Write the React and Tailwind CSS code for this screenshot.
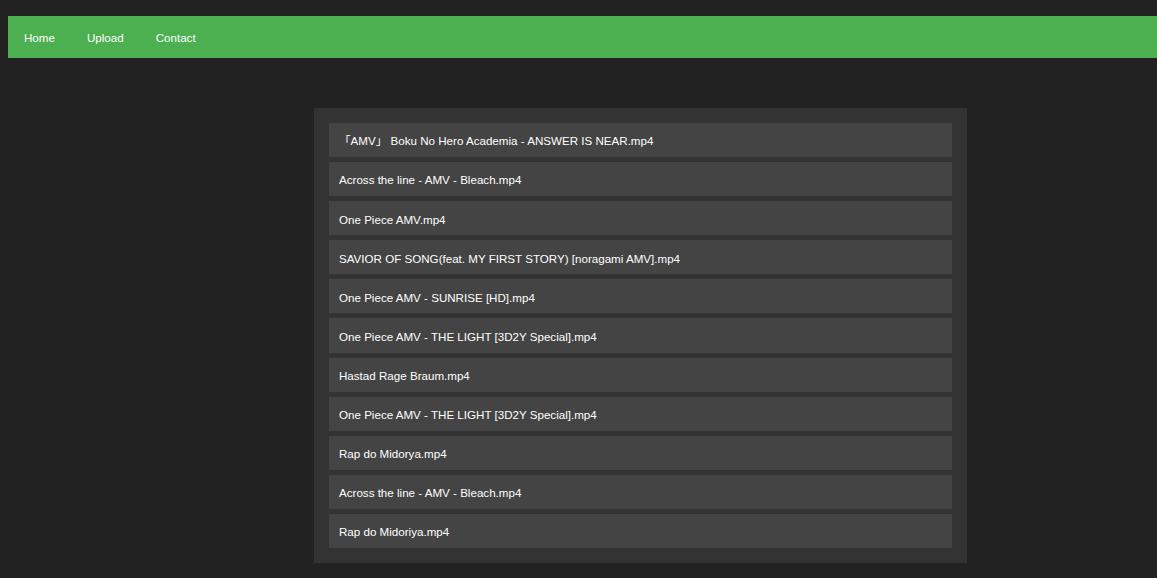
import React from 'react'

const videos = [
  '「AMV」 Boku No Hero Academia - ANSWER IS NEAR.mp4',
  'Across the line - AMV - Bleach.mp4',
  'One Piece AMV.mp4',
  'SAVIOR OF SONG(feat. MY FIRST STORY) [noragami AMV].mp4',
  'One Piece AMV - SUNRISE [HD].mp4',
  'One Piece AMV - THE LIGHT [3D2Y Special].mp4',
  'Hastad Rage Braum.mp4',
  'One Piece AMV - THE LIGHT [3D2Y Special].mp4',
  'Rap do Midorya.mp4',
  'Across the line - AMV - Bleach.mp4',
  'Rap do Midoriya.mp4',
]

function App() {
  return (
    <div className="min-h-screen bg-[#222222] pt-4 pl-2 text-[11.6px] text-white" style={{ fontFamily: '"Liberation Sans", "Noto Sans CJK JP", sans-serif' }}>
      <nav className="flex h-[42px] items-center bg-[#4caf50] px-4 pt-px">
        <a className="mr-[32px]">Home</a>
        <a className="mr-[32px]">Upload</a>
        <a>Contact</a>
      </nav>
      <div className="pt-[50px] pl-[306px]">
        <ul className="flex w-[653px] flex-col gap-[5px] bg-[#333333] p-[15px]">
          {videos.map((v, i) => (
            <li key={i} className="flex h-[34.1px] items-center bg-[#444444] px-[10px] pt-[2px]">{v}</li>
          ))}
        </ul>
      </div>
    </div>
  )
}

export default App
